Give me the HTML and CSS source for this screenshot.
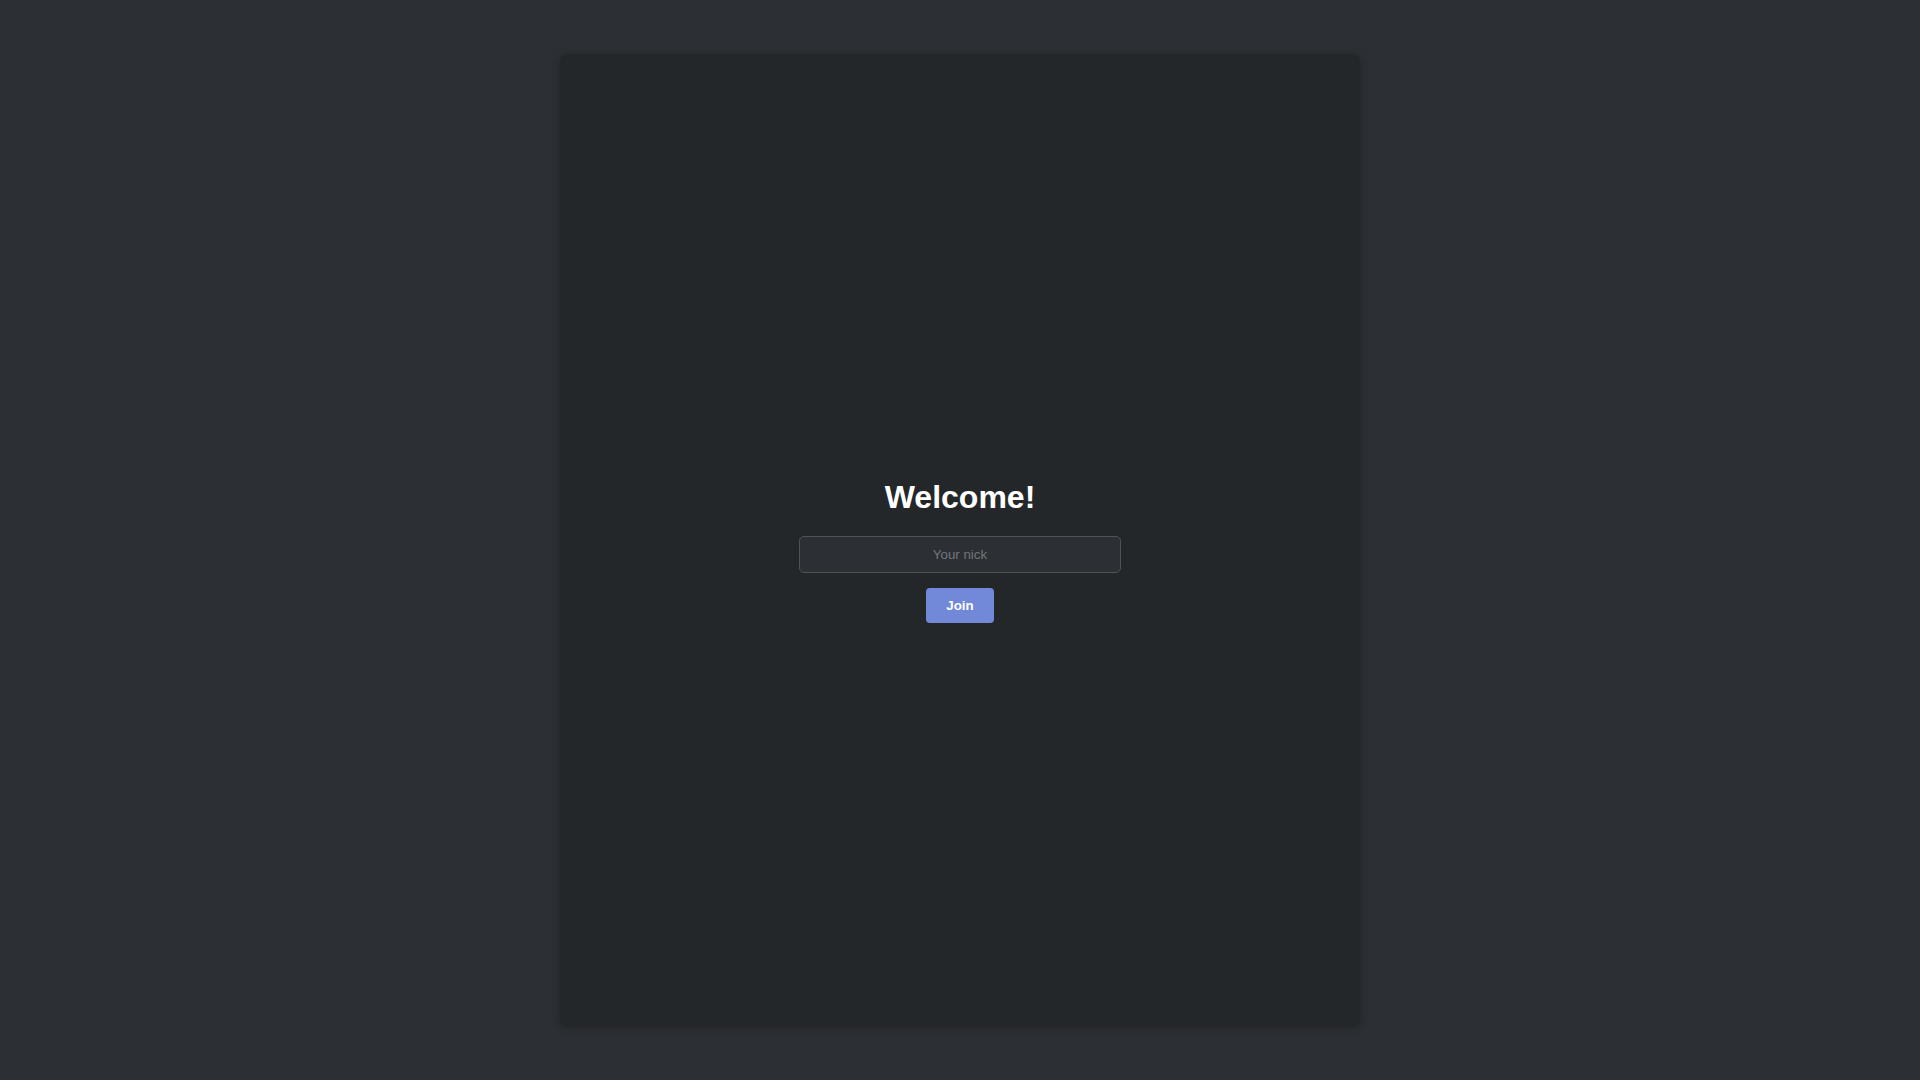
FILE: index.html
```html
<!DOCTYPE html>
<html lang="en">
<head>
<meta charset="utf-8">
<title>Welcome</title>
<link rel="stylesheet" href="styles.css">
</head>
<body>
<main class="card">
  <h1 class="title">Welcome!</h1>
  <input class="nick" type="text" placeholder="Your nick">
  <button class="join" type="button">Join</button>
</main>
</body>
</html>
```
FILE: styles.css
```css
html, body {
  margin: 0;
  padding: 0;
  height: 100%;
}
body {
  background: #2c2f33;
  font-family: "Liberation Sans", Arial, sans-serif;
  color: #ffffff;
  overflow: hidden;
}
.card {
  box-sizing: border-box;
  width: 800px;
  height: 972px;
  margin: 54px auto 0;
  background: #23272a;
  border-radius: 8px;
  box-shadow: 0 2px 10px rgba(0, 0, 0, 0.25);
  display: flex;
  flex-direction: column;
  align-items: center;
  justify-content: center;
}
.title {
  margin: 22px 0 20px;
  font-size: 32px;
  font-weight: bold;
  line-height: 37px;
  color: #ffffff;
}
.nick {
  box-sizing: border-box;
  width: 322px;
  height: 37px;
  padding: 0 10px;
  background: #2c2f33;
  border: 1px solid #4f5257;
  border-radius: 5px;
  color: #dcddde;
  font-family: "Liberation Sans", Arial, sans-serif;
  font-size: 13.333px;
  text-align: center;
  outline: none;
}
.nick::placeholder {
  color: #72767d;
}
.join {
  margin-top: 15px;
  padding: 10px 20px;
  background: #7289da;
  border: none;
  border-radius: 4px;
  color: #ffffff;
  font-family: "Liberation Sans", Arial, sans-serif;
  font-size: 13.333px;
  font-weight: bold;
  line-height: 15px;
  cursor: pointer;
}
```
